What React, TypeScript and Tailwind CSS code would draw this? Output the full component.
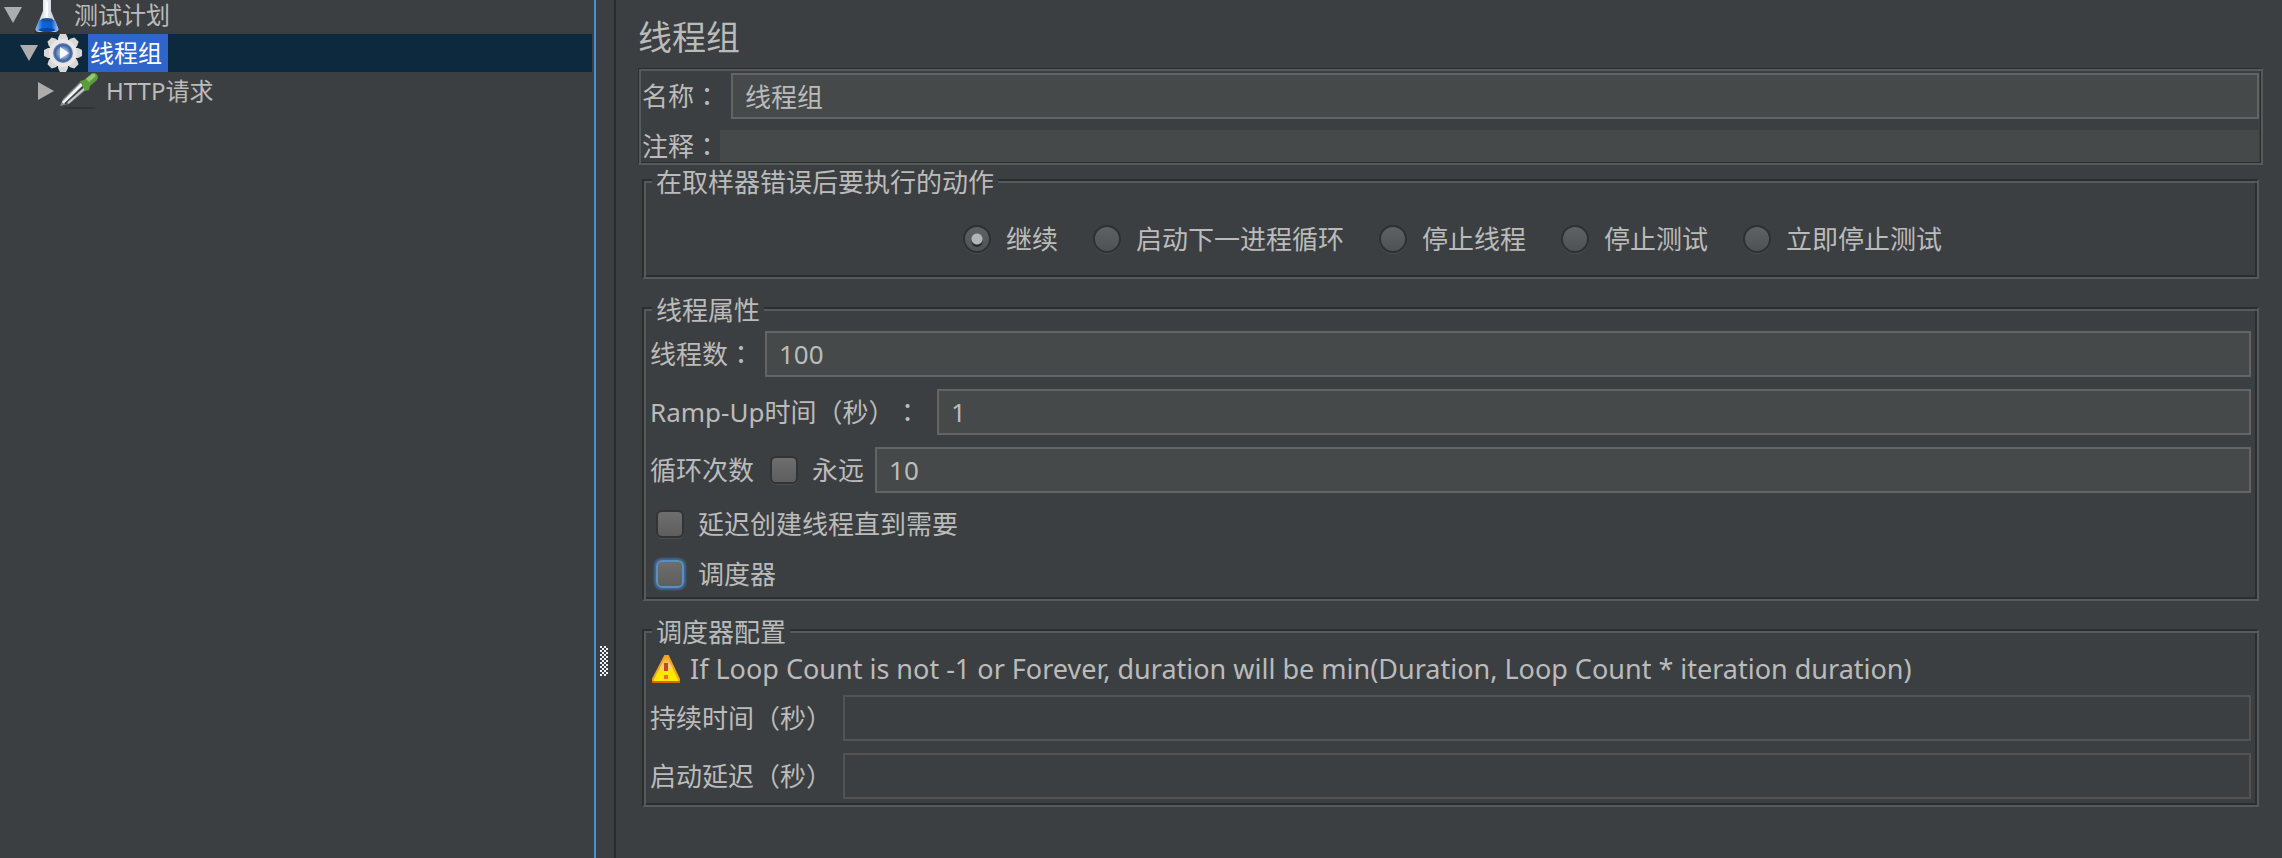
import type { ReactNode } from 'react'
import clsx from 'clsx'

const actions = ['继续', '启动下一进程循环', '停止线程', '停止测试', '立即停止测试']

function Arrow({ open }: { open?: boolean }) {
  return (
    <svg className="w-[18px] h-[18px] shrink-0" viewBox="0 0 18 18" fill="#adadad">
      <path d={open ? 'M0 1h18L9 17z' : 'M2 0v18l16-9z'} />
    </svg>
  )
}

function FlaskIcon() {
  return (
    <svg className="w-[38px] h-[38px] shrink-0" viewBox="0 0 38 38">
      <defs>
        <linearGradient id="glass" x1="0" x2="1">
          <stop offset="0" stopColor="#9fb4cc" />
          <stop offset=".45" stopColor="#f4f6f8" />
          <stop offset="1" stopColor="#a3afbc" />
        </linearGradient>
        <linearGradient id="liquid" x1="0" x2="1">
          <stop offset="0" stopColor="#8fbdf2" />
          <stop offset=".3" stopColor="#0f66d6" />
          <stop offset=".7" stopColor="#0a5fd0" />
          <stop offset="1" stopColor="#a5c9f4" />
        </linearGradient>
      </defs>
      <ellipse cx="19" cy="36" rx="13" ry="2" fill="#2a2c2e" />
      <path d="M15 4h8v11l7 17c1 3-1 4-3 4H11c-2 0-4-1-3-4l7-17z" fill="url(#glass)" />
      <path d="M18 6h2v16h-2z" fill="#fff" />
      <path d="M11 24h16l3 8c1 2 0 3-2 3H10c-2 0-3-1-2-3z" fill="url(#liquid)" />
      <ellipse cx="19" cy="24" rx="6" ry="2" fill="#1c4f9c" />
      <ellipse cx="19" cy="34" rx="8" ry="2" fill="#0848a8" />
    </svg>
  )
}

function GearIcon() {
  return (
    <svg className="w-[38px] h-[38px] shrink-0" viewBox="0 0 38 38">
      <defs>
        <radialGradient id="hub">
          <stop offset="0" stopColor="#dfe8f5" />
          <stop offset=".4" stopColor="#92afd9" />
          <stop offset=".8" stopColor="#3c60a0" />
          <stop offset="1" stopColor="#7890b8" />
        </radialGradient>
      </defs>
      <g fill="#d9d8d6">
        {[0, 45, 90, 135].map((a) => (
          <path key={a} d="M16 0h6l2 4v30l-2 4h-6l-2-4V4z" transform={`rotate(${a} 19 19)`} />
        ))}
      </g>
      <circle cx="19" cy="19" r="14" fill="#e8e7e5" />
      <circle cx="19" cy="19" r="10" fill="url(#hub)" />
      <path d="M16 13v12l9-6z" fill="#f6f8fc" />
    </svg>
  )
}

function DropperIcon() {
  return (
    <svg className="w-[38px] h-[38px] shrink-0" viewBox="0 0 38 38">
      <ellipse cx="19" cy="36" rx="17" ry="1" fill="#2f3133" />
      <path d="M0 34l3-7L20 10l7 7L9 32z" fill="#85888a" />
      <path d="M3 31L22 12" stroke="#f2f2f2" strokeWidth="3" />
      <path d="M5 32L23 15" stroke="#3f4142" strokeWidth="2" />
      <path d="M8 31L25 16" stroke="#c9cbcb" strokeWidth="2" />
      <path d="M20 9l4-1 7-6c4-3 9 1 6 6l-7 6-1 4-4 1z" fill="#5b9c3c" />
      <path d="M26 7l6-5c3-1 4 1 3 3l-6 5z" fill="#93c873" />
    </svg>
  )
}

function WarningIcon() {
  return (
    <svg className="w-7 h-7 shrink-0" viewBox="0 0 28 28">
      <defs>
        <linearGradient id="warn" x1="0" x2="0" y1="0" y2="1">
          <stop offset="0" stopColor="#f0a010" />
          <stop offset=".4" stopColor="#fbd08a" />
          <stop offset=".6" stopColor="#ffe600" />
          <stop offset="1" stopColor="#ffee00" />
        </linearGradient>
      </defs>
      <path d="M13 1h3l11 23v3H1v-3z" fill="url(#warn)" stroke="#f0a41c" strokeWidth="2" />
      <path d="M0 27h28" stroke="#e0640c" strokeWidth="2" />
      <path d="M12 8h4v8h-4z" fill="#c8471a" />
      <path d="M12 20h4v4h-4z" fill="#e8781a" />
    </svg>
  )
}

// full-width colon, centred in its cell
function Colon() {
  return <span className="font-['Noto_Sans_CJK_TC',sans-serif] leading-none" lang="zh-TW">：</span>
}

function TreeRow({ label, icon, open, selected, className, labelClass }: { label: string; icon: ReactNode; open?: boolean; selected?: boolean; className: string; labelClass: string }) {
  return (
    <li className={clsx('flex items-center mr-0.5', selected && 'bg-[#0d293e]', className)}>
      <Arrow open={open} />
      <span className="ml-1.5">{icon}</span>
      <span className={clsx('ml-1.5 pl-0.5 pr-1.5', selected && 'bg-[#2f65ca] text-white', labelClass)}>{label}</span>
    </li>
  )
}

function Group({ title, className, children }: { title: string; className?: string; children: ReactNode }) {
  return (
    <fieldset className={clsx('min-w-0 mx-1 border-2 border-t-[#2b2d2e] border-l-[#2b2d2e] border-r-[#555a5b] border-b-[#555a5b] shadow-[inset_2px_2px_#555a5b,inset_-2px_-2px_#2b2d2e]', className)}>
      <legend className="ml-2 px-1 h-[30px] leading-[34px] bg-[#3c3f41]">{title}</legend>
      {children}
    </fieldset>
  )
}

function Field({ id, label, colon, value, disabled, className, children }: { id: string; label: string; colon?: boolean; value?: string; disabled?: boolean; className?: string; children?: ReactNode }) {
  return (
    <div className="flex items-center">
      <label htmlFor={id} className={clsx('shrink-0 whitespace-nowrap', className)}>{label}{colon && <Colon />}</label>
      {children}
      <input
        id={id}
        type="text"
        defaultValue={value}
        disabled={disabled}
        className={clsx('flex-1 min-w-0 h-[46px] px-3 border-2 outline-none', disabled ? 'border-[#535353] bg-[#3c3f41]' : 'border-[#646464] bg-[#45494a]')}
      />
    </div>
  )
}

function Check({ id, label, focused, className }: { id: string; label: string; focused?: boolean; className?: string }) {
  return (
    <div className={clsx('flex items-center gap-3.5', className)}>
      <input
        id={id}
        type="checkbox"
        className={clsx(
          'appearance-none w-7 h-7 shrink-0 border-2 rounded-md bg-linear-to-b from-[#6e6e6e] to-[#5e5e5e]',
          focused ? 'border-[#5a8ec6] shadow-[0_0_2px_2px_#3f6796]' : 'border-[#333333] shadow-[0_1px_#4c4f51]',
        )}
      />
      <label htmlFor={id} className="whitespace-nowrap">{label}</label>
    </div>
  )
}

export default function App() {
  return (
    <div className="flex min-h-screen bg-[#3c3f41] text-[#bbbbbb] text-[26px] leading-8 font-['Noto_Sans','Noto_Sans_CJK_SC',sans-serif] [text-spacing-trim:space-all] overflow-hidden">
      <nav className="w-[594px] shrink-0 text-2xl">
        <ul>
          <TreeRow label="测试计划" icon={<FlaskIcon />} open className="h-[34px] pb-1 pl-1" labelClass="leading-[30px]" />
          <TreeRow label="线程组" icon={<GearIcon />} open selected className="h-[38px] pl-5" labelClass="leading-[38px]" />
          <TreeRow label="HTTP请求" icon={<DropperIcon />} className="h-[38px] pl-9" labelClass="leading-[38px]" />
        </ul>
      </nav>

      <div className="w-[22px] shrink-0 border-l-2 border-l-[#4a90d0] border-r-2 border-r-[#2b2b2b]">
        <svg className="w-2 h-[30px] ml-1 mt-[646px]" viewBox="0 0 8 30">
          {Array.from({ length: 15 }, (_, i) => (
            <path key={i} d={`M${(i % 2) * 2} ${i * 2 + 1}h2m2 0h2`} stroke="#f0f0f0" strokeWidth="2" />
          ))}
        </svg>
      </div>

      <main className="flex-1 min-w-0 pl-[22px] pr-[19px]">
        <h1 className="pt-1.5 text-[34px] leading-[62px]">线程组</h1>

        <section className="border border-r-2 border-b-2 border-t-[#2b2d2e] border-l-[#2b2d2e] border-r-[#555a5b] border-b-[#555a5b] shadow-[inset_2px_2px_#555a5b,inset_-1px_-1px_#2b2d2e] pl-[3px] pr-0.5 pt-1 pb-px">
          <Field id="name" label="名称" colon value="线程组" className="w-[89px]" />
          <div className="flex items-center h-8 mt-[11px]">
            <label htmlFor="comment" className="w-[78px] shrink-0 whitespace-nowrap">注释<Colon /></label>
            <input id="comment" type="text" className="flex-1 min-w-0 h-8 px-3 bg-[#45494a] outline-none" />
          </div>
        </section>

        <Group title="在取样器错误后要执行的动作">
          <div className="flex justify-center gap-[35px] pl-1 pt-7 pb-[22px]">
            {actions.map((action, i) => (
              <div key={action} className="flex items-center gap-[15px]">
                <input
                  id={`action-${i}`}
                  type="radio"
                  name="action"
                  defaultChecked={i === 0}
                  className="appearance-none w-7 h-7 rounded-full border-2 border-[#2e3032] shadow-[0_1px_#4c4f51] bg-linear-to-b from-[#5e6264] to-[#4e5254] checked:bg-[radial-gradient(circle,#b4b4b4_5px,transparent_6px),radial-gradient(circle_at_50%_60%,#26282a_5px,transparent_6px),linear-gradient(#5e6264,#4e5254)]"
                />
                <label htmlFor={`action-${i}`} className="whitespace-nowrap">{action}</label>
              </div>
            ))}
          </div>
        </Group>

        <Group title="线程属性" className="mt-3.5">
          <div className="flex flex-col gap-3 px-1.5 pt-2">
            <Field id="threads" label="线程数" colon value="100" className="w-[115px]" />
            <Field id="ramp" label="Ramp-Up时间（秒）" colon value="1" className="w-[287px]" />
            <Field id="loops" label="循环次数" value="10">
              <Check id="forever" label="永远" className="ml-4 mr-[11px]" />
            </Field>
          </div>
          <div className="pl-3 pt-1.5">
            <Check id="delay" label="延迟创建线程直到需要" className="h-[50px]" />
            <Check id="scheduler" label="调度器" focused className="h-[50px]" />
          </div>
        </Group>

        <Group title="调度器配置" className="mt-3.5">
          <div className="px-1.5 pt-2 pb-1.5">
            <p className="flex items-center gap-2.5 pl-0.5 mb-2.5 text-[27px] leading-8">
              <WarningIcon />
              If Loop Count is not -1 or Forever, duration will be min(Duration, Loop Count * iteration duration)
            </p>
            <div className="flex flex-col gap-3">
              <Field id="duration" label="持续时间（秒）" disabled className="w-[193px]" />
              <Field id="startup" label="启动延迟（秒）" disabled className="w-[193px]" />
            </div>
          </div>
        </Group>
      </main>
    </div>
  )
}
